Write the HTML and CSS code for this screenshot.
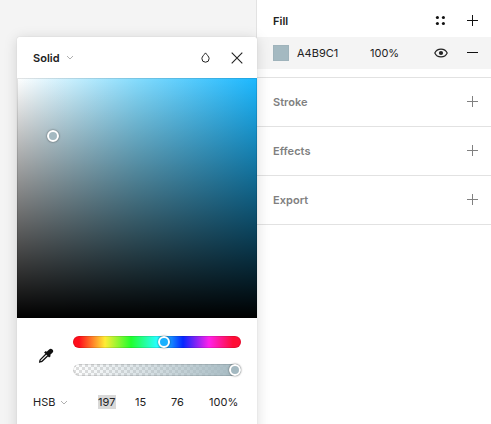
FILE: index.html
```html
<!DOCTYPE html>
<html lang="en">
<head>
<meta charset="utf-8">
<title>Fill</title>
<link rel="stylesheet" href="styles.css">
</head>
<body>
<main class="app">
  <div class="canvas"></div>
  <aside class="sidebar">
    <section class="section section-fill">
      <header class="section-head active">
        <h2>Fill</h2>
        <svg class="icon styles-icon" viewBox="0 0 11 11"><circle cx="2.4" cy="2.5" r="1.55"/><circle cx="8.4" cy="2.5" r="1.55"/><circle cx="2.4" cy="8.5" r="1.55"/><circle cx="8.4" cy="8.5" r="1.55"/></svg>
        <svg class="icon" viewBox="0 0 11 11"><path d="M5 0h1v5h5v1H6v5H5V6H0V5h5z"/></svg>
      </header>
      <div class="paint">
        <span class="swatch"></span>
        <span class="hex">A4B9C1</span>
        <span class="opacity">100%</span>
        <svg class="eye" viewBox="0 0 14 10"><path d="M.8 5C2 2.200 4.300 1.100 7 1.100s5 1.100 6.200 3.900C12 7.800 9.700 8.900 7 8.900S2 7.800.8 5z" fill="none" stroke="#222" stroke-width="1.150"/><circle cx="7" cy="5" r="2.100"/></svg>
        <svg class="icon minus" viewBox="0 0 11 11"><path d="M0 5h11v1H0z"/></svg>
      </div>
    </section>
    <section class="section"><header class="section-head"><h2>Stroke</h2><svg class="icon" viewBox="0 0 11 11"><path d="M5 0h1v5h5v1H6v5H5V6H0V5h5z"/></svg></header></section>
    <section class="section"><header class="section-head"><h2>Effects</h2><svg class="icon" viewBox="0 0 11 11"><path d="M5 0h1v5h5v1H6v5H5V6H0V5h5z"/></svg></header></section>
    <section class="section"><header class="section-head"><h2>Export</h2><svg class="icon" viewBox="0 0 11 11"><path d="M5 0h1v5h5v1H6v5H5V6H0V5h5z"/></svg></header></section>
  </aside>

  <div class="picker">
    <header class="picker-head">
      <h2>Solid</h2>
      <svg class="chevron" viewBox="0 0 8 5"><path d="M1 1l3 3 3-3"/></svg>
      <svg class="drop" viewBox="0 0 9 11"><path d="M4.500.9C3.200 2.900.9 4.500.9 6.600a3.600 3.600 0 0 0 7.200 0C8.100 4.500 5.800 2.900 4.500.9z"/></svg>
      <svg class="close" viewBox="0 0 12 12"><path d="M.7.7l10.600 10.600M11.300.7L.7 11.300"/></svg>
    </header>
    <div class="field"><span class="knob field-knob"></span></div>
    <div class="controls">
      <svg class="dropper" viewBox="0 0 16 16"><path d="M8.700 3.800L11.100 1.500a2.250 2.250 0 0 1 3.300 3.300L12.100 7.100l.7.800-1.700 1.700-5-5 1.700-1.700z"/><path class="tube" d="M8 6L2.400 11.600c-.6.600-.5 1.300-.7 2.400 1.100-.1 1.800-.1 2.400-.7L9.800 7.700"/></svg>
      <div class="sliders">
        <div class="slider hue"><span class="knob hue-knob"></span></div>
        <div class="slider alpha"><span class="knob alpha-knob"></span></div>
      </div>
    </div>
    <footer class="values">
      <span class="mode">HSB</span>
      <svg class="chevron" viewBox="0 0 8 5"><path d="M1 1l3 3 3-3"/></svg>
      <span class="value hue-value"><mark>197</mark></span>
      <span class="value sat">15</span>
      <span class="value bri">76</span>
      <span class="value op">100%</span>
    </footer>
  </div>
</main>
</body>
</html>
```

FILE: styles.css
```css
* { box-sizing: border-box; }

body {
  margin: 0;
  font: 11px/16px Inter, sans-serif;
  color: #222;
  background: #fff;
}

.app {
  position: relative;
  display: flex;
  width: 491px;
  height: 424px;
  overflow: hidden;
}

.canvas { width: 256px; background: #f4f4f4; }

.sidebar { flex: 1; border-left: 1px solid #e2e2e2; background: #fff; }

svg { display: block; flex: none; }

h2 { margin: 0; font-size: 11px; font-weight: 600; line-height: 16px; letter-spacing: .04px; }

.section { height: 49px; border-bottom: 1px solid #e2e2e2; }
.section-fill { height: 78px; }

.section-head {
  display: flex;
  align-items: center;
  height: 48px;
  padding: 0 13px 0 16px;
  color: #808080;
}
.section-head h2 { margin-right: auto; }
.section-head .icon { margin-bottom: 1px; fill: #808080; }
.section-head.active { height: 37px; padding-top: 4px; color: #222; }
.section-head.active .icon { margin-bottom: 0; fill: #111; }

.icon { width: 11px; height: 11px; }
.section-head .styles-icon { margin-right: 21px; }

.paint {
  display: flex;
  align-items: center;
  height: 32px;
  padding: 0 13px 0 16px;
  background: #f4f4f4;
}
.swatch { width: 16px; height: 16px; margin-right: 8px; background: #a4b9c1; border: 1px solid #9fb3bb; }
.hex { width: 73px; }
.opacity { margin-right: auto; }
.eye { width: 14px; height: 10px; margin-right: 19px; fill: #222; }
.minus { fill: #111; margin-bottom: 1px; }

.picker {
  position: absolute;
  left: 17px;
  top: 37px;
  width: 240px;
  height: 400px;
  background: #fff;
  border-radius: 2px;
  box-shadow: 0 2px 14px rgba(0, 0, 0, .15), 0 0 1px rgba(0, 0, 0, .2);
}

.picker-head {
  display: flex;
  align-items: center;
  height: 41px;
  padding: 0 14px 0 16px;
}
.chevron { width: 8px; height: 5px; fill: none; stroke: #b0b0b0; }
.picker-head .chevron { margin-left: 6px; }
.drop { width: 9px; height: 11px; margin-left: auto; fill: none; stroke: #222; }
.close { width: 12px; height: 12px; margin-left: 21px; fill: none; stroke: #222; stroke-width: 1.1; }

.field {
  position: relative;
  height: 240px;
  background: linear-gradient(to top, #000, transparent), linear-gradient(to right, #fff, #84dcfe 50%, #1cb8ff);
  box-shadow: inset 0 0 0 1px rgba(0, 0, 0, .1);
}

.knob {
  position: absolute;
  width: 12px;
  height: 12px;
  border: 2px solid #fff;
  border-radius: 50%;
  box-shadow: 0 0 2px rgba(0, 0, 0, .6);
}
.field-knob { left: 30px; top: 52px; background: #a4b9c1; }

.controls {
  display: flex;
  align-items: center;
  height: 76px;
  padding: 0 16px 0 21px;
}
.dropper { width: 16px; height: 16px; margin-right: 19px; fill: #111; }
.dropper .tube { fill: none; stroke: #111; stroke-width: 1.3; }

.sliders { display: grid; flex: 1; gap: 16px; }
.slider {
  position: relative;
  height: 12px;
  border-radius: 6px;
  box-shadow: inset 0 0 0 1px rgba(0, 0, 0, .1);
}
.hue { background: linear-gradient(to right, #ff0d1b 6px, #ffec35 32px, #21ff2e 58px, #27ffff 84px, #0527ff 110px, #ff21ea 136px, #ff0d35 160px); }
.alpha {
  background: linear-gradient(to right, rgba(164, 185, 193, 0), #a4b9c1), conic-gradient(#fff 25%, #dedede 0 50%, #fff 0 75%, #dedede 0) 0 0 / 6px 6px;
}
.hue-knob { left: 85px; top: 0; background: #18b0ff; }
.alpha-knob { right: 0; top: 0; background: #a4b9c1; }

.values { display: flex; align-items: center; height: 16px; padding-left: 16px; letter-spacing: .05px; }
.mode { width: 27px; }
.value { flex: none; }
.hue-value { width: 37px; margin-left: 30px; }
.value mark { display: block; width: 18px; height: 14px; line-height: 14px; color: inherit; background: #d9d9d9; }
.sat { width: 36px; }
.bri { width: 38px; }
```
